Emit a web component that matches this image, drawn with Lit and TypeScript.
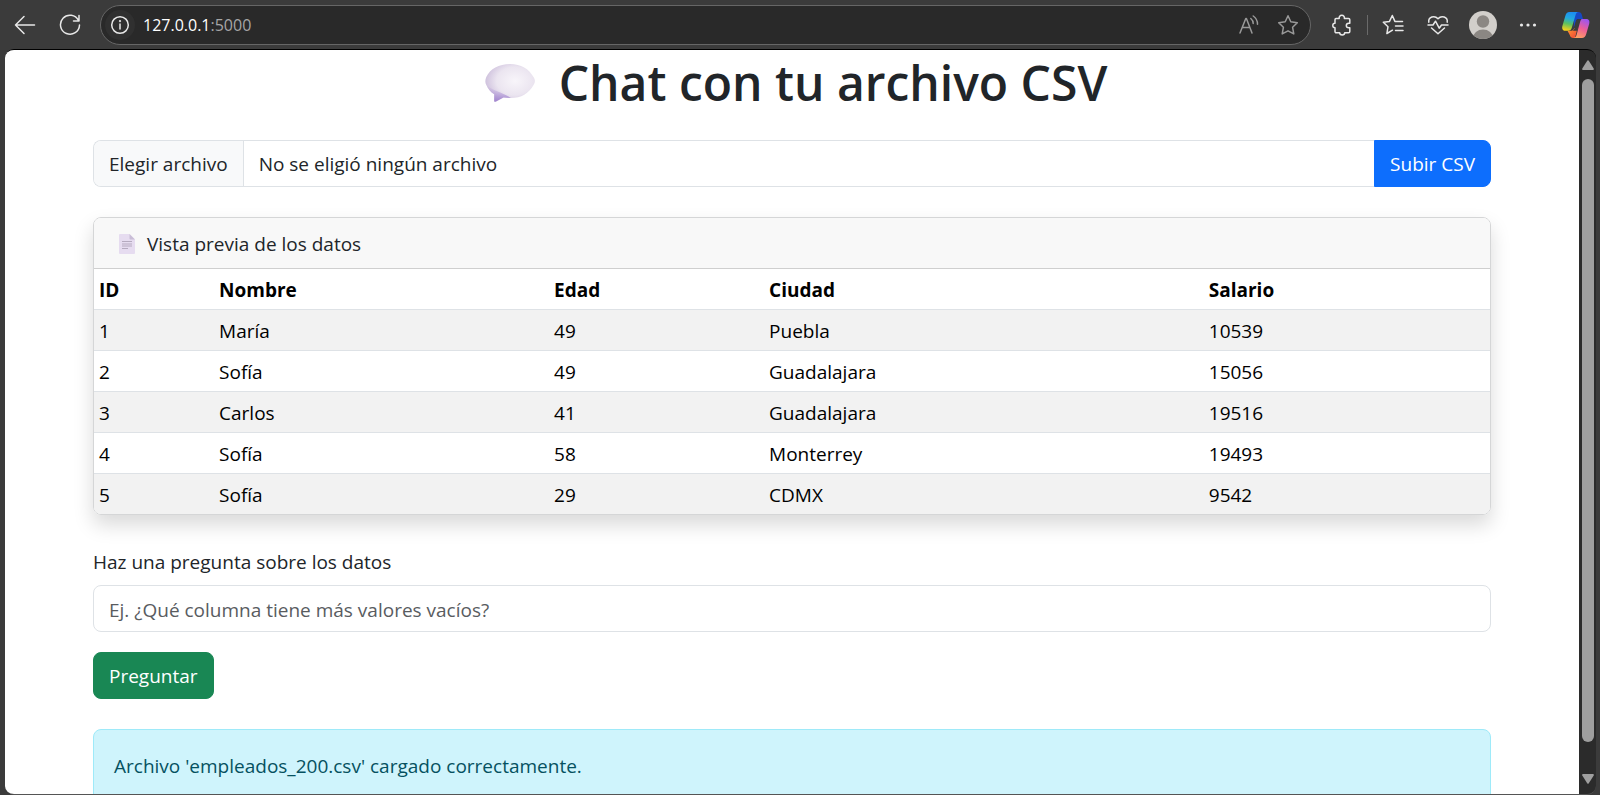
import { LitElement, html, css } from "lit";
import { customElement, state, property } from "lit/decorators.js";

type Row = [number, string, number, string, number];

@customElement("browser-bar")
class BrowserBar extends LitElement {
  @property() host = "127.0.0.1";
  @property() port = ":5000";

  static styles = css`
    :host { display: block; font-family: "Open Sans", "Noto Sans", sans-serif; }
    * { box-sizing: border-box; }
    .bar { display: flex; align-items: center; height: 49px; padding: 0 9px 0 10px; background: #3b3b3b; color: #e8e8e8; }
    button { display: flex; align-items: center; justify-content: center; padding: 0; border: 0; background: none; color: inherit; flex: none; }
    svg { display: block; fill: none; stroke: currentColor; stroke-width: 1.5; stroke-linecap: round; stroke-linejoin: round; }
    .solid { stroke: none; }
    .nav { width: 30px; height: 30px; }
    .back { margin-right: 15px; }
    .address { flex: 1; display: flex; align-items: center; height: 40px; margin-left: 15px; padding: 0 7px 0 4px; border: 1px solid #666; border-radius: 20px; background: #292929; }
    .info { width: 30px; height: 30px; border-radius: 15px; background: #303030; }
    .url { flex: 1; margin-left: 8px; padding-top: 1px; font-size: 16px; line-height: 24px; color: #a6a6a6; }
    .url b { font-weight: 400; color: #fff; }
    .dim { width: 30px; height: 30px; color: #999; margin-left: 9px; }
    .tools { display: flex; align-items: center; }
    .tool { width: 30px; height: 30px; }
    .puzzle { margin-left: 16px; }
    .sep { width: 1px; height: 20px; margin: 0 10px; background: #6a6a6a; }
    .gap { margin-left: 15px; }
    .copilot { margin-left: 18px; }
  `;

  render() {
    return html`
      <header class="bar">
        <button class="nav back" aria-label="Atrás">
          <svg width="22" height="22" viewBox="0 0 22 22"><path d="M20.500 11H1.500M10 2.500 1.500 11l8.500 8.500"/></svg>
        </button>
        <button class="nav" aria-label="Actualizar">
          <svg width="22" height="22" viewBox="0 0 22 22"><path d="M19.500 6.500A9.500 9.500 0 1 0 20.500 11M20 1.500v5.500h-5.500"/></svg>
        </button>
        <div class="address">
          <button class="info" aria-label="Información del sitio">
            <svg width="20" height="20" viewBox="0 0 20 20"><circle cx="10" cy="10" r="8.300"/><path d="M10 9v5"/><circle cx="10" cy="6.200" r=".4"/></svg>
          </button>
          <span class="url"><b>${this.host}</b>${this.port}</span>
          <button class="dim" aria-label="Leer en voz alta">
            <svg width="22" height="22" viewBox="0 0 22 22"><path d="M2 19 7.800 4.500h.6L14 19M4.300 13.500h7.500M12.800 4.500q2.400 2 2.400 5M15.200 2q4.300 3 4.300 8.200"/></svg>
          </button>
          <button class="dim" aria-label="Agregar a favoritos">
            <svg width="22" height="22" viewBox="0 0 22 22"><path d="m11 1.800 2.800 6 6.500.9-4.700 4.600 1.200 6.600L11 16.800l-5.800 3.100 1.200-6.600L1.700 8.700l6.500-.9z"/></svg>
          </button>
        </div>
        <div class="tools">
          <button class="tool puzzle" aria-label="Extensiones">
            <svg width="20" height="22" viewBox="0 0 20 22"><path d="M4 4.500h3.200c-.3-1.900.8-3.200 2.600-3.200s2.900 1.300 2.600 3.200h4.100c.8 0 1.300.5 1.300 1.300v3.400h-1c-1.600 0-2.500.9-2.500 2.300s.9 2.300 2.500 2.300h1v3.700c0 .8-.5 1.300-1.300 1.300h-3.800c0 1.400-1 2.200-2.500 2.200s-2.500-.8-2.500-2.200H4.300c-.8 0-1.300-.5-1.300-1.300v-3.800c-1.500 0-2.200-1-2.200-2.300S1.500 9.200 3 9.200V5.800c0-.8.300-1.300 1-1.300z"/></svg>
          </button>
          <span class="sep"></span>
          <button class="tool" aria-label="Favoritos">
            <svg width="22" height="22" viewBox="0 0 22 22"><path d="m10.500 16.200-5.600 3.300 1.100-6.800L1.300 8.300l6.200-.9L10.300 1.500l2.600 5.900h7.600M13.500 12h7.500M13.500 16.500h7.500"/></svg>
          </button>
          <button class="tool gap" aria-label="Rendimiento">
            <svg width="22" height="22" viewBox="0 0 22 22"><path d="M1.800 8.200C1 3 7.500.8 11 4.800c3.500-4 10-1.800 9.200 3.400M4.500 14l6.500 5.700L17.500 14M1 11h5l2.500-3.800 3.700 7 2.300-3.200H21"/></svg>
          </button>
          <button class="tool gap" aria-label="Perfil">
            <svg class="solid" width="28" height="28" viewBox="0 0 28 28"><defs><clipPath id="round"><circle cx="14" cy="14" r="14"/></clipPath></defs><circle cx="14" cy="14" r="14" fill="#d2cfcb"/><g clip-path="url(#round)" fill="#8b8783"><circle cx="14" cy="10.500" r="6.200"/><ellipse cx="14" cy="27" rx="10" ry="8.500"/></g></svg>
          </button>
          <button class="tool gap" aria-label="Configuración y más">
            <svg class="solid" width="20" height="20" viewBox="0 0 20 20"><g fill="#e8e8e8"><circle cx="3.500" cy="10" r="1.600"/><circle cx="10" cy="10" r="1.600"/><circle cx="16.500" cy="10" r="1.600"/></g></svg>
          </button>
          <button class="tool copilot" aria-label="Copilot">
            <svg class="solid" width="28" height="26" viewBox="0 0 28 26">
              <defs>
                <linearGradient id="a" x1=".6" y1="0" x2=".4" y2="1"><stop offset="0" stop-color="#1b8cf2"/><stop offset=".35" stop-color="#22a8e0"/><stop offset=".65" stop-color="#5cc060"/><stop offset="1" stop-color="#f5d11a"/></linearGradient>
                <linearGradient id="b" x1=".7" y1="0" x2=".3" y2="1"><stop offset="0" stop-color="#9d55f0"/><stop offset=".5" stop-color="#ee5f96"/><stop offset="1" stop-color="#ffa060"/></linearGradient>
                <linearGradient id="c" x1="0" y1="0" x2="1" y2="1"><stop offset="0" stop-color="#ff9a30"/><stop offset="1" stop-color="#ee4038"/></linearGradient>
              </defs>
              <path fill="#1748c4" d="M12 0h4.500c1.800 0 2.800.9 3.300 2.700L21 7h-3.500c-2.200 0-3.300 1-3.900 3l-1.800 6z"/>
              <path fill="url(#c)" d="M5.500 18.800h3.200c2 0 3-.9 3.600-2.800h3.200L13 26h-1.700c-1.900 0-2.900-1-3.400-2.700z"/>
              <path fill="url(#a)" d="M7.500 0h9c-1.800.2-2.500 1.600-3 3.300L9.800 15.800c-.6 2-1.600 3-3.600 3H3.500c-2.700 0-3.900-2-3.100-4.700L3.300 4C4 1.500 5.200 0 7.500 0z"/>
              <path fill="#3b3b3b" d="M14.200 8.300c.5-.9 1.300-1.300 2.500-1.300h3c-1.100.3-1.500 1.400-1.900 2.800l-2.600 9h-4.600c1-.4 1.500-1.300 1.900-2.500z"/>
              <path fill="url(#b)" d="M20 7h4c2.800 0 4 2 3.200 4.800L24.200 22c-.7 2.500-2 4-4.300 4h-8.400c1.900-.2 2.600-1.500 3.100-3.200L18 10.200C18.500 8.200 19 7.200 20 7z"/>
            </svg>
          </button>
        </div>
      </header>
    `;
  }
}

@customElement("app-root")
class AppRoot extends LitElement {
  @state() private fileName = "No se eligió ningún archivo";
  private columns = ["ID", "Nombre", "Edad", "Ciudad", "Salario"];
  private rows: Row[] = [
    [1, "María", 49, "Puebla", 10539],
    [2, "Sofía", 49, "Guadalajara", 15056],
    [3, "Carlos", 41, "Guadalajara", 19516],
    [4, "Sofía", 58, "Monterrey", 19493],
    [5, "Sofía", 29, "CDMX", 9542],
  ];

  static styles = css`
    :host { display: flex; flex-direction: column; height: 100vh; overflow: hidden; background: #3b3b3b; color: #212529; font: 19px/30px "Open Sans", "Noto Sans", sans-serif; }
    * { box-sizing: border-box; }
    button, input { font: inherit; }
    .window { flex: 1; min-height: 0; display: flex; margin: 0 4px 0 5px; border-top: 1px solid #000; border-bottom: 1px solid #555; border-radius: 9px; overflow: hidden; background: #2b2b2b; }
    .page { flex: 1; min-width: 0; overflow: hidden; background: #fff; }
    .container { max-width: 1428px; margin: 0 auto; padding: 0 15px; }
    h1 { display: flex; align-items: center; justify-content: center; gap: 24px; margin: 0 0 24px; padding-left: 8px; font-size: 48px; line-height: 66px; font-weight: 600; }
    .bubble { width: 50px; height: 38px; }
    .group { display: flex; height: 47px; margin-bottom: 30px; }
    .picker { flex: 1; display: flex; line-height: 29px; border: 1px solid #dee2e6; border-right: 0; border-radius: 8px 0 0 8px; overflow: hidden; }
    .file { position: absolute; width: 1px; height: 1px; opacity: 0; }
    .choose, .chosen { padding: 9px 15px 7px; }
    .choose { border-right: 1px solid #dee2e6; background: #f8f9fa; }
    .btn { display: block; padding: 9px 15px 7px; border: 1px solid; border-radius: 8px; color: #fff; height: 47px; line-height: 29px; }
    .upload { border-radius: 0 8px 8px 0; border-color: #0d6efd; background: #0d6efd; }
    .ask { margin-bottom: 30px; border-color: #198754; background: #198754; }
    .card { margin-bottom: 32px; border: 1px solid #d5d6d7; border-radius: 8px; overflow: hidden; box-shadow: 0 10px 20px rgba(0, 0, 0, 0.15); }
    .head { display: flex; align-items: center; gap: 12px; padding: 11px 25px 9px; border-bottom: 1px solid #cfcfcf; background: #f8f8f8; }
    table { width: 100%; border-collapse: separate; border-spacing: 0; table-layout: fixed; color: #000; }
    th, td { padding: 6px 5px 4px; border-bottom: 1px solid #dee2e6; text-align: left; }
    th { font-weight: 700; }
    tbody tr:nth-child(odd) { background: #f2f2f2; }
    tbody tr:last-child td { border-bottom: 0; }
    .c0 { width: 8.6%; } .c1 { width: 24%; } .c2 { width: 15.4%; } .c3 { width: 31.5%; }
    .label { display: block; margin-bottom: 8px; }
    .question { display: block; width: 100%; height: 47px; margin-bottom: 20px; padding: 9px 15px 7px; border: 1px solid #dee2e6; border-radius: 8px; background: #fff; color: #212529; }
    .question::placeholder { color: #595c5f; opacity: 1; }
    .alert { padding: 21px 20px; border: 1px solid #9eeaf9; border-radius: 8px; background: #cff4fc; color: #055160; }
    .scroll { display: flex; flex-direction: column; align-items: center; width: 16px; padding: 10px 0; margin-left: 1px; }
    .scroll svg { display: block; fill: #9f9f9f; }
    .thumb { flex: 1; width: 12px; margin: 9px 0 32px; border-radius: 6px; background: #9f9f9f; }
  `;

  private pick(e: Event) {
    const input = e.target as HTMLInputElement;
    this.fileName = input.files?.[0]?.name ?? "No se eligió ningún archivo";
  }

  render() {
    return html`
      <browser-bar></browser-bar>
      <div class="window">
        <main class="page">
          <div class="container">
            <h1>
              <svg class="bubble" viewBox="0 0 50 38" aria-hidden="true">
                <defs>
                  <radialGradient id="g" cx=".6" cy=".45" r=".62"><stop offset="0" stop-color="#f8f5fa"/><stop offset=".6" stop-color="#ebe5f0"/><stop offset="1" stop-color="#cdbfdc"/></radialGradient>
                  <linearGradient id="t" x1="0" y1="0" x2="0" y2="1"><stop offset="0" stop-color="#b49bd8" stop-opacity="0"/><stop offset="1" stop-color="#a184cf"/></linearGradient>
                </defs>
                <path fill="url(#g)" d="M25 0C36 0 44 5 48.500 13c1.800 3 1.800 5 0 8C44 29.500 36 34 26 34c-3 0-5.500-.2-7.500-.4L11 37.600c-1 .4-1.800 0-1.800-.8v-6.500C5.500 28 3 25 1.300 21c-1.300-2.500-1.300-5 0-8C5 5 14 0 25 0z"/>
                <path fill="url(#t)" d="M26 34c-3 0-5.500-.2-7.500-.4L11 37.600c-1 .4-1.800 0-1.800-.8v-6.500C5.500 28 3 25 1.300 21 8 27 17 28 26 34z"/>
              </svg>
              <span>Chat con tu archivo CSV</span>
            </h1>

            <form class="group" @submit=${(e: Event) => e.preventDefault()}>
              <input class="file" id="csv" type="file" accept=".csv" @change=${this.pick} />
              <label class="picker" for="csv">
                <span class="choose">Elegir archivo</span>
                <span class="chosen">${this.fileName}</span>
              </label>
              <button class="btn upload" type="submit">Subir CSV</button>
            </form>

            <section class="card">
              <div class="head">
                <svg width="16" height="20" viewBox="0 0 16 20" aria-hidden="true">
                  <path fill="#e6dcf0" d="M1 0h9.500L16 5.500V19a1 1 0 0 1-1 1H1a1 1 0 0 1-1-1V1a1 1 0 0 1 1-1z"/>
                  <path fill="#c9bdd6" d="M10.500 0 16 5.500h-4.500a1 1 0 0 1-1-1z"/>
                  <path stroke="#b5aabf" stroke-width="1.200" d="M3 7.500h10M3 10h10M3 12h10M3 14.500h6"/>
                </svg>
                <span>Vista previa de los datos</span>
              </div>
              <table>
                <colgroup>${this.columns.map((_, i) => html`<col class="c${i}" />`)}</colgroup>
                <thead><tr>${this.columns.map((c) => html`<th scope="col">${c}</th>`)}</tr></thead>
                <tbody>${this.rows.map((r) => html`<tr>${r.map((v) => html`<td>${v}</td>`)}</tr>`)}</tbody>
              </table>
            </section>

            <form @submit=${(e: Event) => e.preventDefault()}>
              <label class="label" for="question">Haz una pregunta sobre los datos</label>
              <input class="question" id="question" type="text" placeholder="Ej. ¿Qué columna tiene más valores vacíos?" />
              <button class="btn ask" type="submit">Preguntar</button>
            </form>

            <div class="alert" role="status">Archivo 'empleados_200.csv' cargado correctamente.</div>
          </div>
        </main>
        <div class="scroll" aria-hidden="true">
          <svg width="12" height="10" viewBox="0 0 12 10"><path d="M5.200.8q.8-1 1.600 0L11.700 8.500q.5 1.300-.7 1.500H1Q-.2 9.800.3 8.500z"/></svg>
          <div class="thumb"></div>
          <svg width="12" height="10" viewBox="0 0 12 10"><path d="M5.200 9.200q.8 1 1.600 0L11.700 1.500Q12.200.2 11 0H1Q-.2.2.3 1.500z"/></svg>
        </div>
      </div>
    `;
  }
}
